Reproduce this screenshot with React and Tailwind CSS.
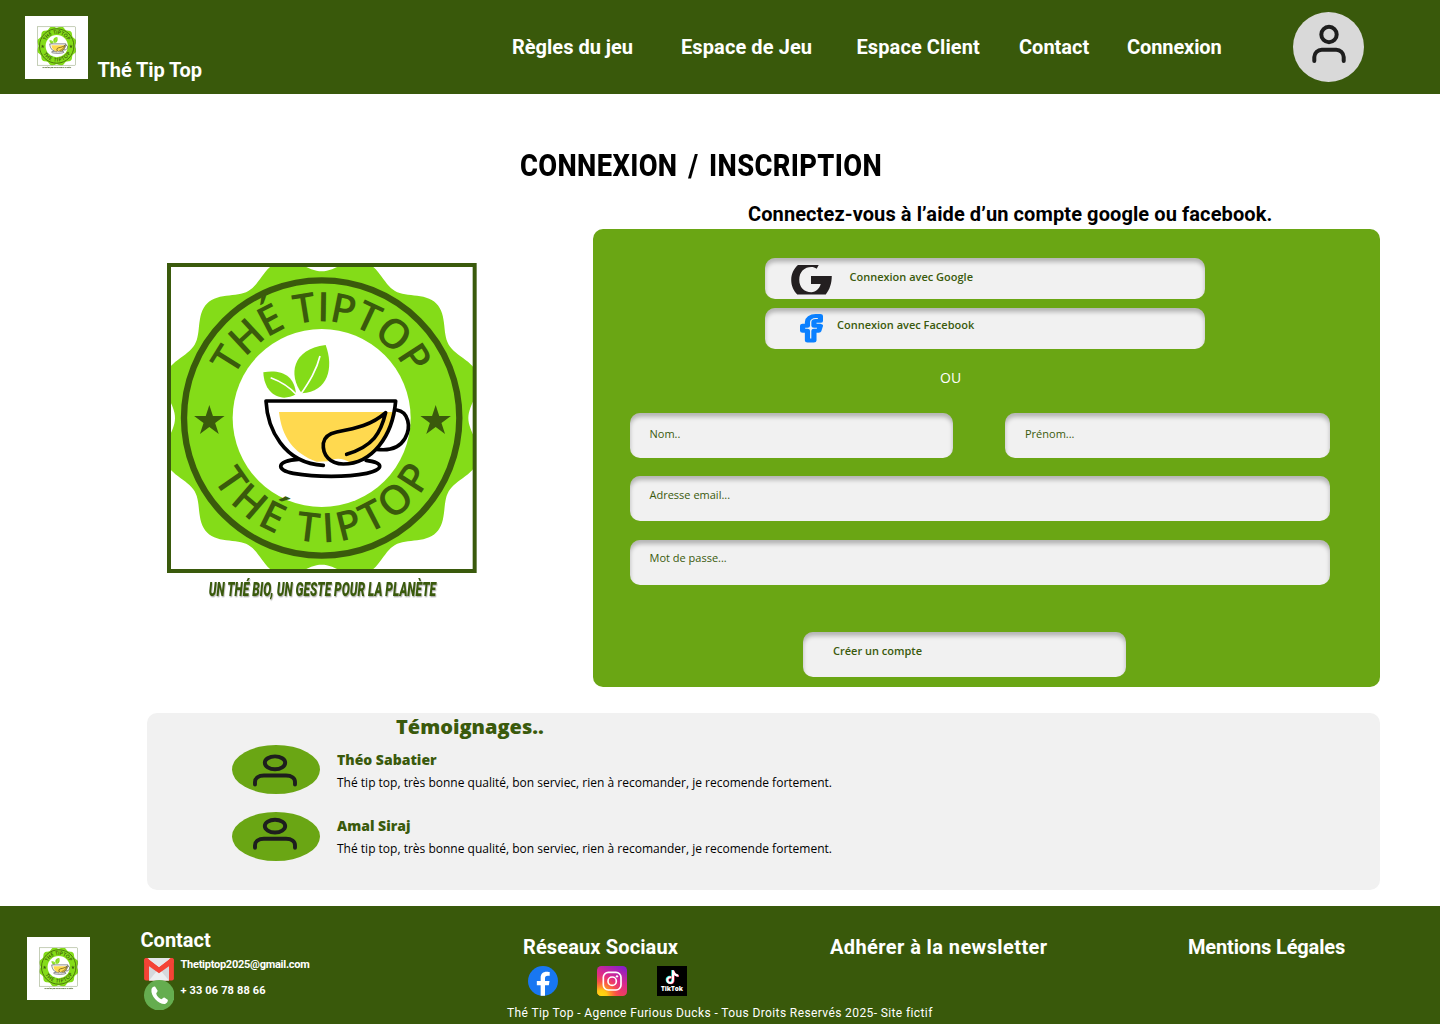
import { useId } from "react";

const CX = 515;
const CY = 504;

// Twelve-lobed rosette around the centre of the logo
const rosette = Array.from({ length: 361 }, (_, i) => {
  const a = (i * Math.PI) / 180;
  const r = 463 - 23 * Math.cos(12 * a);
  return `${i ? "L" : "M"}${(CX + r * Math.sin(a)).toFixed(1)} ${(CY - r * Math.cos(a)).toFixed(1)}`;
}).join("");

function arc(r, from, to, sweep) {
  const p = (deg) => {
    const a = (deg * Math.PI) / 180;
    return `${(CX + r * Math.sin(a)).toFixed(1)} ${(CY - r * Math.cos(a)).toFixed(1)}`;
  };
  return `M${p(from)} A${r} ${r} 0 0 ${sweep} ${p(to)}`;
}

const star = (cx, cy, r) =>
  Array.from({ length: 10 }, (_, i) => {
    const a = (i * Math.PI) / 5;
    const q = i % 2 ? r * 0.382 : r;
    return `${(cx + q * Math.sin(a)).toFixed(1)},${(cy - q * Math.cos(a)).toFixed(1)}`;
  }).join(" ");

function Logo({ className, frame = 12 }) {
  const id = useId();
  return (
    <svg viewBox="0 0 1020 1080" className={`overflow-visible ${className}`}>
      <defs>
        <clipPath id={id + "c"}>
          <rect x="57" y="45" width="917" height="918" />
        </clipPath>
        <path id={id + "t"} d={arc(290, -65, 66, 1)} />
        <path id={id + "b"} d={arc(373, 240.5, 114, 0)} />
      </defs>
      <g clipPath={`url(#${id}c)`}>
        <path d={rosette} fill="#84dc18" />
      </g>
      <rect x="57" y="45" width="917" height="918" fill="none" stroke="#3a5a0c" strokeWidth={frame} />
      <circle cx={CX} cy={CY} r="413" fill="none" stroke="#3a5a0c" strokeWidth="19" />
      <circle cx={CX} cy={CY} r="267" fill="#fff" />
      <g fill="#3a5a0c" className="font-['Open_Sans',sans-serif] font-semibold" fontSize="122">
        <text textLength="655">
          <textPath href={`#${id}t`} textLength="655">THÉ TIPTOP</textPath>
        </text>
        <text textLength="803">
          <textPath href={`#${id}b`} textLength="803">THÉ TIPTOP</textPath>
        </text>
      </g>
      <polygon points={star(178, 513, 48)} fill="#3a5a0c" />
      <polygon points={star(857, 513, 48)} fill="#3a5a0c" />
      <path d="M455 430C415 375 425 298 527 285C552 352 535 425 455 430Z" fill="#84dc18" />
      <path d="M340 367C392 358 434 375 438 433C390 460 342 430 340 367Z" fill="#84dc18" />
      <path d="M510 318C500 360 478 395 450 436M362 383C395 395 420 412 442 436" fill="none" stroke="#fff" strokeWidth="5" />
      <path d="M387 486H728C715 560 665 632 600 638C580 622 550 624 535 634L500 635C430 610 395 560 387 486Z" fill="#ffd94f" />
      <g fill="none" stroke="#000" strokeWidth="11" strokeLinecap="round" strokeLinejoin="round">
        <path d="M520 646C400 640 352 535 348 453H737C728 560 665 642 580 642C540 642 517 615 520 580C523 560 540 550 560 546C620 535 665 525 707 488C692 550 670 588 590 613" />
        <path d="M740 480C775 485 785 530 765 565C745 600 710 602 680 598" />
        <path d="M445 628C380 632 375 660 430 670C500 682 590 682 650 670C705 658 700 637 648 631" />
      </g>
      <text
        x="176"
        y="1038"
        textLength="682"
        lengthAdjust="spacingAndGlyphs"
        fontSize="60"
        fill="#3a5a0c"
        className="font-[Roboto,sans-serif] font-black italic drop-shadow-[2px_4px_2px_rgba(0,0,0,0.3)]"
      >
        UN THÉ BIO, UN GESTE POUR LA PLANÈTE
      </text>
    </svg>
  );
}

function SmallLogo({ className }) {
  return (
    <div className={`flex size-[63px] shrink-0 items-center justify-center bg-white ${className}`}>
      <Logo className="h-[45px] w-[43px]" frame={7} />
    </div>
  );
}

function Testimonial({ name, lift = 0, className, textClass }) {
  return (
    <div className={`ml-[85px] flex h-[49px] gap-[17px] ${className}`}>
      <svg viewBox="0 0 88 49" className="h-[49px] w-[88px] shrink-0">
        <ellipse cx="44" cy="24.5" rx="44" ry="24.5" fill="#6aa614" />
        <g transform={`translate(0 ${-lift})`} fill="none" stroke="#1e1e1e" strokeWidth="3.9" strokeLinecap="round">
          <ellipse cx="43" cy="17.8" rx="10.2" ry="6.4" />
          <path d="M23 39.500v-2.500c0-4 3.500-6.500 9-6.500h22c5.500 0 9 2.500 9 6.500V39.500" />
        </g>
      </svg>
      <div className={`whitespace-nowrap ${textClass}`}>
        <h3 className="text-[14px] leading-[14px] font-extrabold text-[#3a5a0c]">{name}</h3>
        <p className="mt-[10px] text-[12px] leading-[12px] text-black">
          Thé tip top, très bonne qualité, bon serviec, rien à recomander, je recomende fortement.
        </p>
      </div>
    </div>
  );
}

const box = "rounded-[10px] bg-[#f1f1f1] shadow-[inset_0_4px_4px_rgba(0,0,0,0.25)] text-[11px] leading-4 text-[#3a5a0c]";
const heading = "text-[20px] leading-5 font-bold whitespace-nowrap";

function Header() {
  return (
    <header className="flex h-[94px] bg-[#39590b] text-white">
      <SmallLogo className="mt-4 ml-[25px]" />
      <div className={`${heading} mt-[60px] ml-[9.500px] w-[414.500px] tracking-[-0.1px]`}>Thé Tip Top</div>
      <nav className={`${heading} flex w-[782px] items-center`}>
        <a className="w-[169px]">Règles du jeu</a>
        <a className="w-[175.500px] tracking-[0.1px]">Espace de Jeu</a>
        <a className="w-[162.500px] tracking-[0.1px]">Espace Client</a>
        <a className="w-[108px]">Contact</a>
        <a className="tracking-[-0.1px]">Connexion</a>
      </nav>
      <svg viewBox="0 0 71 70" className="mt-3 -ml-px h-[70px] w-[71px] shrink-0">
        <ellipse cx="35.500" cy="35" rx="35.500" ry="35" fill="#d9d9d9" />
        <g fill="none" stroke="#1e1e1e" strokeWidth="4" strokeLinecap="round">
          <circle cx="36" cy="22.500" r="7.700" />
          <path d="M21.300 49v-4a7.500 7.500 0 0 1 7.500-7.300h14.400a7.500 7.500 0 0 1 7.500 7.300v4" />
        </g>
      </svg>
    </header>
  );
}

function LoginPanel() {
  return (
    <section className="h-[458px] w-[787px] shrink-0 rounded-[10px] bg-[#6aa614] pt-[29px] pl-[36.500px]">
      <button className={`${box} ml-[135.500px] flex h-[41px] w-[440px] items-start font-semibold`}>
        <svg viewBox="0 0 121 88" className="mt-[7px] ml-[26px] h-[29.500px] w-[41px] shrink-0">
          <path
            d="M82 0H20C7 12 0 27 0 45C0 62 7 77 18 88H103C115 74 121 54 121 33H59V57H88C84 71 74 81 60 81C38 81 24 66 24 44C24 20 40 6 60 6C66 6 71 8 76 11Z"
            fill="#231f20"
          />
        </svg>
        <span className="mt-[11px] ml-[17.500px]">Connexion avec Google</span>
      </button>
      <button className={`${box} mt-[9px] ml-[135.500px] flex h-[41px] w-[440px] items-start font-semibold`}>
        <svg viewBox="5.400 0.400 14.200 23.200" preserveAspectRatio="none" className="mt-[6px] ml-[35px] h-[28.500px] w-[23px] shrink-0">
          <path
            d="M18 2h-3a5 5 0 0 0-5 5v3H7v4h3v8h4v-8h3l1-4h-4V7a1 1 0 0 1 1-1h3z"
            fill="none"
            stroke="#0a80ff"
            strokeWidth="3.200"
            strokeLinejoin="round"
          />
        </svg>
        <span className="mt-[9px] ml-[14px]">Connexion avec Facebook</span>
      </button>
      <div className="mt-[22px] ml-[310.500px] text-[14px] leading-[14px] font-medium text-white">OU</div>
      <div className="mt-[28px] flex gap-[52.500px]">
        <div className={`${box} h-[45px] w-[323px] pt-[13px] pl-[20px]`}>Nom..</div>
        <div className={`${box} h-[45px] w-[325px] pt-[13px] pl-[20px]`}>Prénom...</div>
      </div>
      <div className={`${box} mt-[17.500px] h-[45px] w-[700px] pt-[11px] pl-[20px]`}>Adresse email...</div>
      <div className={`${box} mt-[19.500px] h-[45px] w-[700px] pt-[10px] pl-[20px]`}>Mot de passe...</div>
      <button className={`${box} mt-[46.500px] ml-[173.500px] block h-[45px] w-[323px] pb-[7px] pl-[30px] text-left font-semibold`}>
        Créer un compte
      </button>
    </section>
  );
}

function GmailIcon() {
  return (
    <svg viewBox="0 0 90 68" className="h-[22.500px] w-[30px]">
      <rect width="90" height="68" rx="6" fill="#f44336" />
      <path d="M15 0H75V68H15Z" fill="#e8eaed" />
      <path d="M15 68V20L45 44L15 68ZM75 68V20L45 44Z" fill="#d5d8dc" />
      <path d="M15 68L38 40H52L75 68Z" fill="#eceff1" />
      <path d="M0 6Q2 0 9 0L45 27L81 0Q88 0 90 6V14L45 46L0 14Z" fill="#f44336" />
      <path d="M10 0H80L45 27Z" fill="#e3e5e8" />
    </svg>
  );
}

function PhoneIcon() {
  return (
    <svg viewBox="0 0 90 90" className="h-[30.500px] w-[30.500px]">
      <circle cx="45" cy="45" r="45" fill="#65ad4f" />
      <path
        d="M22 27C24 22 29 18 33 20L40 31C41 34 37 37 36 40C38 48 44 54 51 57C55 56 57 51 60 52L70 58C72 63 66 70 60 71C43 71 19 48 22 27Z"
        fill="#fff"
      />
    </svg>
  );
}

function FacebookIcon() {
  return (
    <svg viewBox="0 0 90 90" className="size-[30px]">
      <circle cx="45" cy="45" r="45" fill="#1877f2" />
      <path d="M38 89.500V58H26.500V45H38V35C38 23 45 17 56 17C61 17 65 18 65 18V29.500H59C53 29.500 51 33 51 37V45H64.500L62.500 58H51V89.500Z" fill="#fff" />
    </svg>
  );
}

function InstagramIcon() {
  return (
    <svg viewBox="0 0 90 90" className="size-[30px]">
      <defs>
        <linearGradient id="ig-base" x1="0.8" y1="0" x2="0.3" y2="1">
          <stop offset="0" stopColor="#8a1fc8" />
          <stop offset="0.45" stopColor="#dc2a8c" />
          <stop offset="1" stopColor="#f8503c" />
        </linearGradient>
        <radialGradient id="ig-glow" cx="0.15" cy="1" r="0.75">
          <stop offset="0" stopColor="#ffdc10" />
          <stop offset="0.25" stopColor="#ffc814" />
          <stop offset="0.65" stopColor="#ff5a3c" stopOpacity="0.7" />
          <stop offset="1" stopColor="#f03070" stopOpacity="0" />
        </radialGradient>
      </defs>
      <rect width="90" height="90" rx="13" fill="url(#ig-base)" />
      <rect width="90" height="90" rx="13" fill="url(#ig-glow)" />
      <g fill="none" stroke="#fff" strokeWidth="5">
        <rect x="19" y="19" width="53" height="53" rx="15" />
        <circle cx="45.500" cy="45.500" r="12.500" />
      </g>
      <circle cx="60" cy="31" r="3.500" fill="#fff" />
    </svg>
  );
}

function TikTokIcon() {
  const note = "M45 13H51C52 20 57 25 64 26V32C59 32 55 30 51 27V41C51 49 46 54 40 54C33 54 28 49 28 42C28 35 35 29 43 31V37C38 36 34 38 34 42C34 45 37 48 40 48C43 48 45 45 45 41Z";
  return (
    <svg viewBox="0 0 90 90" className="size-[30px]">
      <rect width="90" height="90" fill="#000" />
      <path d={note} fill="#25f4ee" transform="translate(-2 -1)" />
      <path d={note} fill="#fe2c55" transform="translate(2 1)" />
      <path d={note} fill="#fff" />
      <text x="12" y="76" fontSize="18" textLength="66" lengthAdjust="spacingAndGlyphs" fill="#fff" className="font-['Open_Sans',sans-serif] font-extrabold">
        TikTok
      </text>
    </svg>
  );
}

function Footer() {
  return (
    <footer className="mt-4 flex h-[118px] bg-[#39590b] text-white">
      <SmallLogo className="mt-[31px] ml-[27px]" />
      <div className="mt-6 ml-[50.500px] w-[366.500px] shrink-0">
        <h2 className={heading}>Contact</h2>
        <div className="mt-2 ml-[3px] flex gap-[6.500px] text-[11px] leading-[11px] font-bold whitespace-nowrap">
          <div className="flex w-[30.500px] flex-col">
            <GmailIcon />
            <div className="-mt-px">
              <PhoneIcon />
            </div>
          </div>
          <div>
            <div className="mt-[1px] tracking-[-0.260px]">Thetiptop2025@gmail.com</div>
            <div className="mt-[15px] tracking-[0.150px]">+ 33 06 78 88 66</div>
          </div>
        </div>
      </div>
      <div className="mt-[31px] w-[322px] shrink-0">
        <h2 className={`${heading} ml-[16px] tracking-[0.130px]`}>Réseaux Sociaux</h2>
        <div className="mt-[9px] ml-[21px] flex">
          <FacebookIcon />
          <div className="ml-[38.500px]">
            <InstagramIcon />
          </div>
          <div className="ml-[30px]">
            <TikTokIcon />
          </div>
        </div>
        <p className="mt-[11px] text-[12px] leading-[12px] tracking-[0.390px] whitespace-nowrap">
          Thé Tip Top - Agence Furious Ducks - Tous Droits Reservés 2025- Site fictif
        </p>
      </div>
      <h2 className={`${heading} mt-[31px] ml-[1px] w-[358px] tracking-[0.400px]`}>Adhérer à la newsletter</h2>
      <h2 className={`${heading} mt-[31px] tracking-[-0.150px]`}>Mentions Légales</h2>
    </footer>
  );
}

export default function App() {
  return (
    <div className="h-[1024px] w-[1440px] overflow-hidden bg-white font-[Roboto,sans-serif]">
      <Header />
      <main>
        <h1 className="mt-[56px] ml-[520px] w-fit origin-left scale-x-[0.882] text-[31px] leading-[31px] font-extrabold tracking-[0.400px] [word-spacing:4px] whitespace-nowrap text-black">
          CONNEXION / INSCRIPTION
        </h1>
        <p className={`${heading} mt-[23px] ml-[748px] tracking-[0.100px] text-black`}>
          Connectez-vous à l’aide d’un compte google ou facebook.
        </p>
        <div className="mt-[5px] flex font-['Open_Sans',sans-serif]">
          <div className="w-[593px] shrink-0 pt-[21px] pl-[150px]">
            <Logo className="h-[360px] w-[340px]" />
          </div>
          <LoginPanel />
        </div>
        <section className="mt-[26px] ml-[147px] h-[177px] w-[1233px] rounded-[10px] bg-[#f1f1f1] pt-[4px] font-['Open_Sans',sans-serif]">
          <h2 className="ml-[249px] text-[20px] leading-5 font-extrabold text-[#3a5a0c]">Témoignages..</h2>
          <Testimonial name="Théo Sabatier" className="mt-[8px]" textClass="pt-[8px]" />
          <Testimonial name="Amal Siraj" lift={3.7} className="mt-[18px]" textClass="pt-[7px]" />
        </section>
      </main>
      <Footer />
    </div>
  );
}
